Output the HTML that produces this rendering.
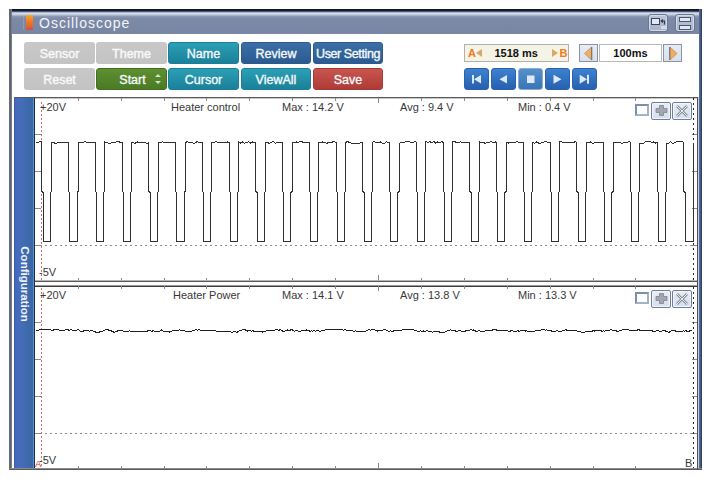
<!DOCTYPE html>
<html><head><meta charset="utf-8">
<style>
html,body{margin:0;padding:0;width:711px;height:479px;overflow:hidden;background:#fff;}
body{position:relative;font-family:"Liberation Sans",sans-serif;}
.a{position:absolute;}
.btn{position:absolute;height:22px;border-radius:3px;color:#f6f9fb;font-weight:normal;-webkit-text-stroke:0.35px currentColor;font-size:12.5px;letter-spacing:0px;line-height:23px;text-align:center;box-sizing:border-box;}
.gray{background:linear-gradient(#c8c8c8,#c3c3c3);color:#f8f8f8;padding-top:1px;-webkit-text-stroke:0.45px #f8f8f8;}
.teal{background:linear-gradient(#2ba0b4,#1b809a);border:1px solid #1c7e98;}
.blue{background:linear-gradient(#3b6fa8,#2b5a90);border:1px solid #2a5a8e;}
.green{background:linear-gradient(#5f8f32,#4a7a24);border:1px solid #456f20;}
.red{background:linear-gradient(#c9554f,#ae3b37);border:1px solid #a83a36;}
.pb{position:absolute;top:68px;width:25px;height:22px;border-radius:3px;background:linear-gradient(#3d82cf,#2760b0);box-sizing:border-box;border:1px solid #2a62ae;}
.txt{position:absolute;font-size:11px;color:#383838;line-height:12px;white-space:nowrap;}
</style></head><body>

<!-- window frame -->

<!-- title bar -->
<div class="a" style="left:9px;top:9px;width:693px;height:25px;background:linear-gradient(#0c1424 0px,#18203a 2px,#4a5670 2.5px,#98a4ba 3px,#d4dcea 4.5px,#c4ccdc 5.5px,#8c98b2 7.5px,#7c8aa6 9.5px,#7886a3 25px);"></div>
<div class="a" style="left:26px;top:15px;width:7px;height:15px;background:linear-gradient(#f2a838,#f07a1c 45%,#e06a30 70%,#cc5048);border-radius:1px;"></div>
<div class="a" style="left:23px;top:16px;width:1px;height:14px;background:#9aa6c0;opacity:.6"></div>
<div class="a" style="left:39px;top:15px;font-size:14px;letter-spacing:1px;line-height:16px;color:#f2f4f8;">Oscilloscope</div>

<div class="a" style="left:9px;top:9px;width:3px;height:461px;background:linear-gradient(90deg,#6a6e78,#5e626c 60%,#8a8e96);"></div>
<!-- title icons -->
<div class="a" style="left:648px;top:14px;width:20px;height:18px;border-radius:3px;box-sizing:border-box;border:1px solid #6a7690;box-shadow:inset 0 0 0 1px #d4dbe8;background:linear-gradient(#bcc6d8,#a8b3c8);"></div>
<div class="a" style="left:651px;top:18px;width:9px;height:7px;box-sizing:border-box;border:1px solid #3a4560;border-top-width:1.5px;background:#e2e8f2;"></div>
<div class="a" style="left:661px;top:26px;width:5px;height:3px;background:#d4dbe8;"></div>
<svg class="a" style="left:0;top:0" width="711" height="479"><path d="M664.5,20.5 L664.5,24.5 M661.5,21 L664.5,21 M662.8,19.5 L661.2,21 L662.8,22.5" stroke="#2e3a56" stroke-width="1.2" fill="none"/></svg>
<div class="a" style="left:675px;top:14px;width:20px;height:18px;border-radius:3px;box-sizing:border-box;border:1px solid #6a7690;box-shadow:inset 0 0 0 1px #d4dbe8;background:linear-gradient(#bcc6d8,#a8b3c8);"></div>
<div class="a" style="left:679px;top:17px;width:12px;height:5px;box-sizing:border-box;border:1px solid #4a5570;background:#e2e8f2;"></div>
<div class="a" style="left:679px;top:24.5px;width:12px;height:5px;box-sizing:border-box;border:1px solid #4a5570;background:#e2e8f2;"></div>
<div class="a" style="left:698px;top:97px;width:1px;height:373px;background:#c4cfe0;"></div><div class="a" style="left:699px;top:9px;width:3px;height:461px;background:linear-gradient(90deg,#58709a,#48608a 40%,#2a3858);"></div>
<!-- buttons row 1 -->
<div class="btn gray" style="left:24px;top:42px;width:71px;">Sensor</div>
<div class="btn gray" style="left:96px;top:42px;width:71px;">Theme</div>
<div class="btn teal" style="left:168px;top:42px;width:71px;">Name</div>
<div class="btn blue" style="left:241px;top:42px;width:70px;">Review</div>
<div class="btn blue" style="left:313px;top:42px;width:70px;letter-spacing:-0.4px;">User Setting</div>
<!-- row 2 -->
<div class="btn gray" style="left:24px;top:68px;width:71px;">Reset</div>
<div class="btn green" style="left:96px;top:68px;width:71px;"><span style="position:relative;left:1px;">Start</span><span style="position:absolute;left:58px;top:5px;width:0;height:0;border-left:3px solid transparent;border-right:3px solid transparent;border-bottom:3px solid #d6e0c8;"></span><span style="position:absolute;left:58px;top:11.5px;width:0;height:0;border-left:3px solid transparent;border-right:3px solid transparent;border-top:3px solid #d6e0c8;"></span></div>
<div class="btn teal" style="left:168px;top:68px;width:71px;">Cursor</div>
<div class="btn teal" style="left:241px;top:68px;width:70px;">ViewAll</div>
<div class="btn red" style="left:313px;top:68px;width:70px;">Save</div>

<!-- A/B box -->
<div class="a" style="left:464px;top:44px;width:105px;height:18px;box-sizing:border-box;border:1px solid #b4b2a8;background:#f5f3e6;"></div>
<div class="a" style="left:468px;top:45px;font-size:11px;font-weight:bold;line-height:16px;color:#f07a20;">A</div>
<div class="a" style="left:476px;top:49px;width:0;height:0;border-top:4.5px solid transparent;border-bottom:4.5px solid transparent;border-right:6px solid #d8a868;"></div>
<div class="a" style="left:494.5px;top:45px;font-size:11px;font-weight:bold;line-height:16px;color:#111;">1518 ms</div>
<div class="a" style="left:552px;top:49px;width:0;height:0;border-top:4.5px solid transparent;border-bottom:4.5px solid transparent;border-left:6px solid #d8a868;"></div>
<div class="a" style="left:559.5px;top:45px;font-size:11px;font-weight:bold;line-height:16px;color:#f07a20;">B</div>

<!-- time/div -->
<div class="a" style="left:579px;top:44px;width:19px;height:18px;box-sizing:border-box;border:1px solid #8c929e;background:linear-gradient(#e6ecf5,#d8e0ec);"></div>
<svg class="a" style="left:0;top:0" width="711" height="479"><polygon points="591.5,47 591.5,60 584.5,53.5" fill="#eeb060" stroke="#b08040" stroke-width="0.6"/><line x1="591.8" y1="47" x2="591.8" y2="60" stroke="#56608a" stroke-width="0.9"/></svg>
<div class="a" style="left:599px;top:44px;width:63px;height:18px;box-sizing:border-box;border:1px solid #b8b8b8;background:#fff;"></div>
<div class="a" style="left:599px;top:45px;width:63px;text-align:center;font-size:11px;font-weight:bold;line-height:16px;color:#111;">100ms</div>
<div class="a" style="left:663px;top:44px;width:19px;height:18px;box-sizing:border-box;border:1px solid #8c929e;background:linear-gradient(#e6ecf5,#d8e0ec);"></div>
<svg class="a" style="left:0;top:0" width="711" height="479"><polygon points="670,47 670,60 677,53.5" fill="#eeb060" stroke="#b08040" stroke-width="0.6"/><line x1="669.7" y1="47" x2="669.7" y2="60" stroke="#56608a" stroke-width="0.9"/></svg>

<!-- playback -->
<div class="pb" style="left:464px;"></div>
<div class="pb" style="left:491px;"></div>
<div class="pb" style="left:518px;background:linear-gradient(#5590cc,#3a74b4);border:1px solid #86aed8;"></div>
<div class="pb" style="left:545px;"></div>
<div class="pb" style="left:572px;"></div>
<svg class="a" style="left:0;top:0;" width="711" height="479">
<g fill="#dde9f6">
<rect x="472" y="75" width="2" height="8.5"/><polygon points="474,79.2 481,75 481,83.5"/>
<polygon points="499.5,79.2 507,75 507,83.5"/>
<rect x="527" y="75.5" width="7.5" height="7.5"/>
<polygon points="553.5,74.8 553.5,83.7 561.5,79.2"/>
<polygon points="579.7,74.8 579.7,83.7 587,79.2"/><rect x="587" y="74.8" width="2" height="8.9"/>
</g>
</svg>

<!-- sidebar -->
<div class="a" style="left:14px;top:97px;width:20px;height:371px;background:linear-gradient(90deg,#3a5aaa 0px,#4468bc 1.5px,#476cbc 5px,#426cb2 10px,#3a68a6 17px,#3968a4 18.5px,#5890c8 19px,#5890c8 20px);"></div>
<div class="a" style="left:34px;top:97px;width:1px;height:371px;background:#1b2c52;"></div>
<div class="a" style="left:24.5px;top:283.5px;width:0;height:0;"><div style="position:absolute;left:0;top:0;transform:translate(-50%,-50%) rotate(90deg);font-size:11.5px;font-weight:bold;color:#eef2fa;white-space:nowrap;line-height:12px;">Configuration</div></div>

<!-- chart svg -->
<svg class="a" style="left:0;top:0;" width="711" height="479" shape-rendering="crispEdges">
<!-- panel borders -->
<rect x="14" y="97" width="683" height="1" fill="#5a5a5a"/><rect x="35" y="98" width="662" height="1" fill="#c8c8c8"/>
<rect x="35" y="280" width="663" height="1" fill="#b4b4b4"/><rect x="35" y="281" width="663" height="1" fill="#585858"/>
<rect x="35" y="285" width="663" height="1" fill="#9a9a9a"/><rect x="35" y="286" width="663" height="1" fill="#3a3a3a"/>
<rect x="9" y="468" width="693" height="1" fill="#8a8a8a"/><rect x="9" y="469" width="693" height="1" fill="#5a5a5a"/>
<rect x="697" y="97" width="1" height="372" fill="#505050"/>
<g stroke="#8a8a8a" stroke-width="1">
<line x1="78.5" y1="98" x2="78.5" y2="100.5"/>
<line x1="78.5" y1="277.5" x2="78.5" y2="280"/>
<line x1="121.5" y1="98" x2="121.5" y2="100.5"/>
<line x1="121.5" y1="277.5" x2="121.5" y2="280"/>
<line x1="164.5" y1="98" x2="164.5" y2="100.5"/>
<line x1="164.5" y1="277.5" x2="164.5" y2="280"/>
<line x1="206.5" y1="98" x2="206.5" y2="100.5"/>
<line x1="206.5" y1="277.5" x2="206.5" y2="280"/>
<line x1="249.5" y1="98" x2="249.5" y2="100.5"/>
<line x1="249.5" y1="277.5" x2="249.5" y2="280"/>
<line x1="292.5" y1="98" x2="292.5" y2="100.5"/>
<line x1="292.5" y1="277.5" x2="292.5" y2="280"/>
<line x1="335.5" y1="98" x2="335.5" y2="100.5"/>
<line x1="335.5" y1="277.5" x2="335.5" y2="280"/>
<line x1="378.5" y1="98" x2="378.5" y2="103"/>
<line x1="378.5" y1="275" x2="378.5" y2="280"/>
<line x1="421.5" y1="98" x2="421.5" y2="100.5"/>
<line x1="421.5" y1="277.5" x2="421.5" y2="280"/>
<line x1="464.5" y1="98" x2="464.5" y2="100.5"/>
<line x1="464.5" y1="277.5" x2="464.5" y2="280"/>
<line x1="507.5" y1="98" x2="507.5" y2="100.5"/>
<line x1="507.5" y1="277.5" x2="507.5" y2="280"/>
<line x1="550.5" y1="98" x2="550.5" y2="100.5"/>
<line x1="550.5" y1="277.5" x2="550.5" y2="280"/>
<line x1="593.5" y1="98" x2="593.5" y2="100.5"/>
<line x1="593.5" y1="277.5" x2="593.5" y2="280"/>
<line x1="635.5" y1="98" x2="635.5" y2="100.5"/>
<line x1="635.5" y1="277.5" x2="635.5" y2="280"/>
<line x1="35" y1="134.5" x2="41" y2="134.5"/>
<line x1="692" y1="134.5" x2="697" y2="134.5"/>
<line x1="35" y1="171.5" x2="41" y2="171.5"/>
<line x1="692" y1="171.5" x2="697" y2="171.5"/>
<line x1="35" y1="208.5" x2="41" y2="208.5"/>
<line x1="692" y1="208.5" x2="697" y2="208.5"/>
<line x1="35" y1="245.5" x2="41" y2="245.5"/>
<line x1="692" y1="245.5" x2="697" y2="245.5"/>
<line x1="78.5" y1="286" x2="78.5" y2="288.5"/>
<line x1="78.5" y1="465.5" x2="78.5" y2="468"/>
<line x1="121.5" y1="286" x2="121.5" y2="288.5"/>
<line x1="121.5" y1="465.5" x2="121.5" y2="468"/>
<line x1="164.5" y1="286" x2="164.5" y2="288.5"/>
<line x1="164.5" y1="465.5" x2="164.5" y2="468"/>
<line x1="206.5" y1="286" x2="206.5" y2="288.5"/>
<line x1="206.5" y1="465.5" x2="206.5" y2="468"/>
<line x1="249.5" y1="286" x2="249.5" y2="288.5"/>
<line x1="249.5" y1="465.5" x2="249.5" y2="468"/>
<line x1="292.5" y1="286" x2="292.5" y2="288.5"/>
<line x1="292.5" y1="465.5" x2="292.5" y2="468"/>
<line x1="335.5" y1="286" x2="335.5" y2="288.5"/>
<line x1="335.5" y1="465.5" x2="335.5" y2="468"/>
<line x1="378.5" y1="286" x2="378.5" y2="291"/>
<line x1="378.5" y1="463" x2="378.5" y2="468"/>
<line x1="421.5" y1="286" x2="421.5" y2="288.5"/>
<line x1="421.5" y1="465.5" x2="421.5" y2="468"/>
<line x1="464.5" y1="286" x2="464.5" y2="288.5"/>
<line x1="464.5" y1="465.5" x2="464.5" y2="468"/>
<line x1="507.5" y1="286" x2="507.5" y2="288.5"/>
<line x1="507.5" y1="465.5" x2="507.5" y2="468"/>
<line x1="550.5" y1="286" x2="550.5" y2="288.5"/>
<line x1="550.5" y1="465.5" x2="550.5" y2="468"/>
<line x1="593.5" y1="286" x2="593.5" y2="288.5"/>
<line x1="593.5" y1="465.5" x2="593.5" y2="468"/>
<line x1="635.5" y1="286" x2="635.5" y2="288.5"/>
<line x1="635.5" y1="465.5" x2="635.5" y2="468"/>
<line x1="35" y1="322.5" x2="41" y2="322.5"/>
<line x1="692" y1="322.5" x2="697" y2="322.5"/>
<line x1="35" y1="359.5" x2="41" y2="359.5"/>
<line x1="692" y1="359.5" x2="697" y2="359.5"/>
<line x1="35" y1="396.5" x2="41" y2="396.5"/>
<line x1="692" y1="396.5" x2="697" y2="396.5"/>
<line x1="35" y1="433.5" x2="41" y2="433.5"/>
<line x1="692" y1="433.5" x2="697" y2="433.5"/>
</g>
<!-- dashed lines -->
<g stroke="#8c8c8c" stroke-width="1" stroke-dasharray="2,3" shape-rendering="crispEdges">
<line x1="35" y1="245.5" x2="693" y2="245.5"/>
<line x1="35" y1="433.5" x2="693" y2="433.5"/>
</g>
<g stroke="#2a2a2a" stroke-width="1" stroke-dasharray="2,3">
<line x1="693.5" y1="98" x2="693.5" y2="280"/>
<line x1="693.5" y1="287" x2="693.5" y2="468"/>
</g>
<g stroke="#e06868" stroke-width="1" stroke-dasharray="2,2">
<line x1="41.5" y1="102" x2="41.5" y2="280"/>
<line x1="41.5" y1="288" x2="41.5" y2="468"/>
</g>
</svg>
<svg class="a" style="left:0;top:0;" width="711" height="479">
<polyline fill="none" stroke="#303030" stroke-width="1" shape-rendering="crispEdges" points="35.5,142.5 37.5,142.5 39.5,141.9 41.5,141.5 41.9,142.5 41.9,191.5 43.1,192.5 43.1,241.5 50.2,241.5 50.2,192.5 51.3,191.5 51.3,142.5 53.3,142.5 55.3,143.3 57.3,143 59.3,142.5 61.3,142.5 63.3,143 65.3,142.5 67.3,143 68.7,142.5 68.7,191.5 69.9,192.5 69.9,241.5 77,241.5 77,192.5 78,191.5 78,142.5 80,142.5 82,142.5 84,141.9 86,141.9 88,142.5 90,142.5 92,142.5 94,143 95.4,142.5 95.4,191.5 96.6,192.5 96.6,241.5 103.7,241.5 103.7,192.5 104.8,191.5 104.8,141.9 106.8,142.5 108.8,143.3 110.8,143 112.8,142.5 114.8,142.5 116.8,141.5 118.8,141.5 120.8,143 122.2,142.5 122.2,191.5 123.4,192.5 123.4,241.5 130.5,241.5 130.5,192.5 131.6,191.5 131.6,142.5 133.6,143 135.6,143 137.6,141.9 139.6,142.5 141.6,142.5 143.6,142.5 145.6,143 147.6,143.3 148.9,142.5 148.9,191.5 150.1,192.5 150.1,241.5 157.2,241.5 157.2,192.5 158.3,191.5 158.3,142.5 160.3,142.5 162.3,141.9 164.3,142.5 166.3,143 168.3,142.5 170.3,143 172.3,142.5 174.3,143 175.7,142.5 175.7,191.5 176.8,192.5 176.8,241.5 184,241.5 184,192.5 185.1,191.5 185.1,143.3 187.1,141.5 189.1,142.5 191.1,142.5 193.1,143 195.1,143 197.1,141.5 199.1,142.5 201.1,142.5 202.4,142.5 202.4,191.5 203.6,192.5 203.6,241.5 210.7,241.5 210.7,192.5 211.8,191.5 211.8,142.5 213.8,143 215.8,141.5 217.8,142.5 219.8,143 221.8,142.5 223.8,143 225.8,142.5 227.8,141.9 229.2,142.5 229.2,191.5 230.3,192.5 230.3,241.5 237.5,241.5 237.5,192.5 238.6,191.5 238.6,141.5 240.6,143 242.6,141.9 244.6,143.3 246.6,142.5 248.6,141.9 250.6,143 252.6,141.9 254.6,142.5 255.9,142.5 255.9,191.5 257.1,192.5 257.1,241.5 264.2,241.5 264.2,192.5 265.3,191.5 265.3,142.5 267.3,142.5 269.3,143.3 271.3,142.5 273.3,141.5 275.3,143.3 277.3,142.5 279.3,142.5 281.3,143 282.6,142.5 282.6,191.5 283.8,192.5 283.8,241.5 290.9,241.5 290.9,192.5 292.1,191.5 292.1,142.5 294.1,143 296.1,141.9 298.1,142.5 300.1,141.5 302.1,141.9 304.1,142.5 306.1,143 308.1,142.5 309.4,142.5 309.4,191.5 310.6,192.5 310.6,241.5 317.7,241.5 317.7,192.5 318.8,191.5 318.8,142.5 320.8,143 322.8,141.9 324.8,142.5 326.8,143.3 328.8,142.5 330.8,142.5 332.8,141.9 334.8,141.9 336.1,142.5 336.1,191.5 337.3,192.5 337.3,241.5 344.4,241.5 344.4,192.5 345.6,191.5 345.6,142.5 347.6,141.5 349.6,142.5 351.6,143.3 353.6,143 355.6,143 357.6,143.3 359.6,143.3 361.6,142.5 362.9,142.5 362.9,191.5 364.1,192.5 364.1,241.5 371.2,241.5 371.2,192.5 372.3,191.5 372.3,142.5 374.3,141.5 376.3,142.5 378.3,143 380.3,141.9 382.3,143 384.3,143.3 386.3,141.9 388.3,142.5 389.6,142.5 389.6,191.5 390.8,192.5 390.8,241.5 397.9,241.5 397.9,192.5 399.1,191.5 399.1,143.3 401.1,142.5 403.1,142.5 405.1,141.9 407.1,141.5 409.1,141.5 411.1,142.5 413.1,142.5 415.1,141.5 416.4,142.5 416.4,191.5 417.6,192.5 417.6,241.5 424.7,241.5 424.7,192.5 425.8,191.5 425.8,141.5 427.8,142.5 429.8,141.5 431.8,143 433.8,141.5 435.8,143.3 437.8,141.9 439.8,142.5 441.8,141.5 443.1,142.5 443.1,191.5 444.3,192.5 444.3,241.5 451.4,241.5 451.4,192.5 452.6,191.5 452.6,141.9 454.6,141.5 456.6,142.5 458.6,142.5 460.6,141.9 462.6,142.5 464.6,142.5 466.6,143 468.6,142.5 469.9,142.5 469.9,191.5 471.1,192.5 471.1,241.5 478.2,241.5 478.2,192.5 479.3,191.5 479.3,141.9 481.3,142.5 483.3,142.5 485.3,143.3 487.3,142.5 489.3,142.5 491.3,141.5 493.3,142.5 495.3,141.9 496.6,142.5 496.6,191.5 497.8,192.5 497.8,241.5 504.9,241.5 504.9,192.5 506.1,191.5 506.1,141.9 508.1,143.3 510.1,141.9 512,142.5 514,142.5 516,141.9 518,141.9 520,143 522,142.5 523.4,142.5 523.4,191.5 524.6,192.5 524.6,241.5 531.7,241.5 531.7,192.5 532.8,191.5 532.8,142.5 534.8,143.3 536.8,141.9 538.8,143.3 540.8,143 542.8,142.5 544.8,141.5 546.8,141.9 548.8,142.5 550.1,142.5 550.1,191.5 551.4,192.5 551.4,241.5 558.4,241.5 558.4,192.5 559.5,191.5 559.5,141.5 561.5,141.9 563.5,142.5 565.5,142.5 567.5,142.5 569.5,142.5 571.5,142.5 573.5,142.5 575.5,141.5 576.9,142.5 576.9,191.5 578.1,192.5 578.1,241.5 585.2,241.5 585.2,192.5 586.3,191.5 586.3,142.5 588.3,142.5 590.3,141.9 592.3,143.3 594.3,143 596.3,142.5 598.3,142.5 600.3,142.5 602.3,142.5 603.6,142.5 603.6,191.5 604.9,192.5 604.9,241.5 611.9,241.5 611.9,192.5 613,191.5 613,142.5 615,141.9 617,143 619,142.5 621,143 623,143 625,142.5 627,142.5 629,141.5 630.4,142.5 630.4,191.5 631.6,192.5 631.6,241.5 638.7,241.5 638.7,192.5 639.8,191.5 639.8,143.3 641.8,143 643.8,143 645.8,141.5 647.8,141.5 649.8,141.5 651.8,142.5 653.8,141.9 655.8,143.3 657.1,142.5 657.1,191.5 658.4,192.5 658.4,241.5 665.4,241.5 665.4,192.5 666.5,191.5 666.5,143.3 668.5,143.3 670.5,141.5 672.5,143.3 674.5,143 676.5,141.9 678.5,141.9 680.5,141.9 682.5,141.9 683.9,142.5 683.9,191.5 685.1,192.5 685.1,241.5 692.2,241.5 693.5,241.5 693.5,142.5"/>
<polyline fill="none" stroke="#202020" stroke-width="1" shape-rendering="crispEdges" points="35.5,330.8 36.7,331 37.9,330.3 39.1,329.8 40.3,329.6 41.5,329.3 42.7,329.4 43.9,329.2 45.1,329.2 46.3,329.2 47.5,329.2 48.7,329.3 49.9,329.2 51.1,330.1 52.3,330.4 53.5,330 54.7,329.8 55.9,329.8 57.1,329.8 58.3,329.4 59.5,330.2 60.7,331 61.9,330.9 63.1,330.9 64.3,330.3 65.5,329.8 66.7,329.8 67.9,329.6 69.1,330.3 70.3,330 71.5,329.4 72.7,330.4 73.9,330.5 75.1,330 76.3,330.3 77.5,329.7 78.7,329.9 79.9,330.8 81.1,331.3 82.3,331.5 83.5,331 84.7,330.8 85.9,330.3 87.1,330.8 88.3,330.8 89.5,331.2 90.7,330.9 91.9,330.5 93.1,331 94.3,331.7 95.5,332 96.7,332.2 97.9,332.3 99.1,332.3 100.3,331.6 101.5,331.5 102.7,331.1 103.9,330.4 105.1,329.8 106.3,329.7 107.5,329.6 108.7,330.1 109.9,330.9 111.1,330.8 112.3,331.4 113.5,332 114.7,332.3 115.9,331.8 117.1,331.2 118.3,330.7 119.5,330.3 120.7,330 121.9,330.3 123.1,331 124.3,331.4 125.5,331.3 126.7,331.4 127.9,331.7 129.1,330.9 130.3,331.1 131.5,331.7 132.7,331.9 133.9,332 135.1,331.8 136.3,331.1 137.5,331.5 138.7,331.1 139.9,331.5 141.1,332 142.3,331.6 143.5,331.3 144.7,331.9 145.9,332 147.1,331.3 148.3,330.6 149.5,330.2 150.7,330.9 151.9,331.3 153.1,330.7 154.3,331.2 155.5,331.8 156.7,331.8 157.9,331.4 159.1,331.4 160.3,330.7 161.5,330 162.7,330.9 163.9,331.1 165.1,331.1 166.3,331.6 167.5,331.4 168.7,331.8 169.9,332.1 171.1,331.4 172.3,330.9 173.5,330.6 174.7,330.3 175.9,330.5 177.1,330.2 178.3,330.2 179.5,329.8 180.7,330.6 181.9,330.4 183.1,330.4 184.3,330.6 185.5,331.2 186.7,331 187.9,331.6 189.1,331.4 190.3,331.4 191.5,331.3 192.7,330.5 193.9,330.5 195.1,330.1 196.3,329.5 197.5,330.2 198.7,329.8 199.9,330 201.1,330.5 202.3,330.6 203.5,330.4 204.7,330.5 205.9,330.7 207.1,331.1 208.3,330.5 209.5,330.6 210.7,330.3 211.9,330.1 213.1,330.6 214.3,330.7 215.5,330.8 216.7,331.2 217.9,331.7 219.1,331.4 220.3,331.5 221.5,331.3 222.7,331.2 223.9,331.4 225.1,331.2 226.3,331.2 227.5,331.1 228.7,331.7 229.9,331.8 231.1,332.1 232.3,332.3 233.5,331.7 234.7,331.6 235.9,332.1 237.1,332.3 238.3,331.5 239.5,330.8 240.7,330.7 241.9,330.1 243.1,329.9 244.3,329.4 245.5,330 246.7,330.5 247.9,331.2 249.1,330.6 250.3,330.9 251.5,331.1 252.7,330.6 253.9,331.2 255.1,331.8 256.3,331.2 257.5,331.7 258.7,331.4 259.9,331.3 261.1,331.9 262.3,332.1 263.5,331.4 264.7,331.2 265.9,331.1 267.1,330.8 268.3,330.4 269.5,330.2 270.7,330.6 271.9,330 273.1,330.2 274.3,330.3 275.5,329.7 276.7,329.7 277.9,330.1 279.1,330.2 280.3,329.7 281.5,330.6 282.7,331.1 283.9,331.7 285.1,331 286.3,330.6 287.5,330 288.7,330.5 289.9,330.3 291.1,329.8 292.3,329.9 293.5,330.7 294.7,331.2 295.9,330.7 297.1,330.3 298.3,331 299.5,331 300.7,331.3 301.9,330.6 303.1,330 304.3,330.4 305.5,330.4 306.7,329.9 307.9,330.7 309.1,330.9 310.3,331.3 311.5,330.6 312.7,331.2 313.9,330.5 315.1,331.1 316.3,330.9 317.5,330.7 318.7,330.8 319.9,331.4 321.1,330.9 322.3,330.4 323.5,330.5 324.7,330.2 325.9,329.7 327.1,329.5 328.3,329.2 329.5,329.2 330.7,329.2 331.9,329.3 333.1,330 334.3,329.8 335.5,330 336.7,329.7 337.9,329.7 339.1,329.2 340.3,329.2 341.5,329.2 342.7,329.9 343.9,330.1 345.1,329.8 346.3,330 347.5,330.8 348.7,330.2 349.9,330.8 351.1,330.7 352.3,330.7 353.5,331.2 354.7,331 355.9,330.9 357.1,331.2 358.3,331.8 359.5,331.4 360.7,331.7 361.9,331.8 363.1,331.8 364.3,331.5 365.5,331.1 366.7,330.4 367.9,330 369.1,329.5 370.3,330.1 371.5,329.9 372.7,329.6 373.9,329.2 375.1,330 376.3,330.7 377.5,331 378.7,330.6 379.9,330.3 381.1,330.1 382.3,330.2 383.5,329.8 384.7,329.9 385.9,329.8 387.1,330.6 388.3,331.3 389.5,331.3 390.7,330.8 391.9,331.5 393.1,331.1 394.3,330.8 395.5,330.1 396.7,330.1 397.9,330.2 399.1,330.3 400.3,330 401.5,330.1 402.7,329.6 403.9,329.5 405.1,329.2 406.3,329.4 407.5,329.2 408.7,329.2 409.9,329.2 411.1,329.2 412.3,329.6 413.5,329.9 414.7,330.5 415.9,330.8 417.1,331.1 418.3,331.6 419.5,331.3 420.7,330.9 421.9,331.6 423.1,330.9 424.3,331.2 425.5,331.3 426.7,330.6 427.9,331.1 429.1,331.6 430.3,331.6 431.5,331.8 432.7,332.1 433.9,331.3 435.1,331.2 436.3,331.1 437.5,331.6 438.7,331.8 439.9,332.1 441.1,332 442.3,332.3 443.5,332.3 444.7,332.2 445.9,331.6 447.1,330.7 448.3,330.2 449.5,330.1 450.7,329.7 451.9,330.4 453.1,330.6 454.3,330.8 455.5,331 456.7,331.2 457.9,331.1 459.1,330.3 460.3,330.9 461.5,331.2 462.7,331.1 463.9,331.1 465.1,331.3 466.3,330.6 467.5,330.9 468.7,330.6 469.9,330 471.1,329.8 472.3,330.3 473.5,330 474.7,330.5 475.9,331.3 477.1,331.2 478.3,330.9 479.5,330.9 480.7,331.1 481.9,331.4 483.1,331.5 484.3,331.5 485.5,330.8 486.7,330.3 487.9,330 489.1,330.5 490.3,330.3 491.5,330.5 492.7,329.9 493.9,329.4 495.1,329.4 496.3,329.9 497.5,330.4 498.7,330.7 499.9,330.4 501.1,330.5 502.3,330.5 503.5,330.5 504.7,330 505.9,330.8 507.1,330.3 508.3,331.1 509.5,331.7 510.7,330.8 511.9,330.7 513.1,331.2 514.3,331.8 515.5,331.5 516.7,331.1 517.9,330.6 519.1,331.3 520.3,330.8 521.5,330.9 522.7,330.4 523.9,330.5 525.1,331.2 526.3,330.6 527.5,331.1 528.7,331 529.9,331.6 531.1,331.7 532.3,331.1 533.5,331.6 534.7,331.4 535.9,330.6 537.1,330 538.3,330.1 539.5,330.2 540.7,330 541.9,329.7 543.1,329.7 544.3,329.6 545.5,330.3 546.7,329.7 547.9,330.3 549.1,330.9 550.3,330.3 551.5,331 552.7,331.3 553.9,331.8 555.1,331.3 556.3,331 557.5,330.8 558.7,331.5 559.9,331.5 561.1,331.2 562.3,331 563.5,330.6 564.7,330 565.9,329.6 567.1,330.3 568.3,330.1 569.5,330.9 570.7,330.5 571.9,330.2 573.1,330.4 574.3,330 575.5,330 576.7,330.8 577.9,331.3 579.1,331.7 580.3,331.7 581.5,332.1 582.7,332.3 583.9,332.1 585.1,332.1 586.3,331.2 587.5,331.5 588.7,331.3 589.9,331.5 591.1,331.6 592.3,331.1 593.5,330.4 594.7,331.1 595.9,330.5 597.1,330.5 598.3,330.4 599.5,330.2 600.7,330.6 601.9,331.3 603.1,330.9 604.3,331.1 605.5,330.8 606.7,330.8 607.9,330.7 609.1,330.2 610.3,329.9 611.5,329.6 612.7,330.4 613.9,330.5 615.1,330.2 616.3,330.9 617.5,331.6 618.7,331.3 619.9,330.7 621.1,330.3 622.3,329.8 623.5,329.8 624.7,329.4 625.9,329.3 627.1,329.3 628.3,329.7 629.5,330.4 630.7,330.9 631.9,330.7 633.1,330.6 634.3,330.7 635.5,330.5 636.7,330.4 637.9,329.8 639.1,329.7 640.3,330.6 641.5,330.1 642.7,330.2 643.9,330.5 645.1,331.1 646.3,330.6 647.5,330.3 648.7,330.1 649.9,330.1 651.1,330.1 652.3,330.9 653.5,331.4 654.7,331.8 655.9,330.9 657.1,330.2 658.3,330.6 659.5,331.2 660.7,331.1 661.9,331.2 663.1,330.4 664.3,330.3 665.5,331 666.7,331.4 667.9,331.8 669.1,332.3 670.3,331.6 671.5,330.9 672.7,330.4 673.9,330.5 675.1,330.8 676.3,331.5 677.5,331.6 678.7,331.7 679.9,331.9 681.1,331.6 682.3,331.5 683.5,330.7 684.7,331.1 685.9,330.7 687.1,331.3 688.3,331.4 689.5,331 690.7,330.4 691.9,330.2"/>
</svg>

<!-- panel 1 labels -->
<div class="txt" style="left:40px;top:100.5px;">+20V</div>
<div class="txt" style="left:171px;top:100.5px;">Heater control</div>
<div class="txt" style="left:282px;top:100.5px;">Max : 14.2 V</div>
<div class="txt" style="left:400px;top:100.5px;">Avg : 9.4 V</div>
<div class="txt" style="left:518px;top:100.5px;">Min : 0.4 V</div>
<div class="txt" style="left:39px;top:266px;">-5V</div>
<!-- panel 2 labels -->
<div class="txt" style="left:40px;top:288.5px;">+20V</div>
<div class="txt" style="left:173px;top:288.5px;">Heater Power</div>
<div class="txt" style="left:282px;top:288.5px;">Max : 14.1 V</div>
<div class="txt" style="left:400px;top:288.5px;">Avg : 13.8 V</div>
<div class="txt" style="left:518px;top:288.5px;">Min : 13.3 V</div>
<div class="txt" style="left:39px;top:454px;">-5V</div>
<div class="txt" style="left:35px;top:457.5px;color:#d83838;font-size:9.5px;">A</div>
<div class="txt" style="left:685px;top:457px;">B</div>

<!-- checkboxes & buttons panel 1 -->
<div class="a" style="left:635px;top:104px;width:14px;height:12px;box-sizing:border-box;border:2px solid #7d8eab;border-right-color:#a6b2c6;border-bottom-color:#a6b2c6;background:#fff;"></div>
<div class="a" style="left:651px;top:102px;width:20px;height:18px;box-sizing:border-box;border:1px solid #6f7e9e;border-radius:2px;box-shadow:inset 0 0 0 1px #f2f5fa;background:linear-gradient(#e8edf5,#d6deea);"></div>
<div class="a" style="left:672px;top:102px;width:20px;height:18px;box-sizing:border-box;border:1px solid #6f7e9e;border-radius:2px;box-shadow:inset 0 0 0 1px #f2f5fa;background:linear-gradient(#e8edf5,#d6deea);"></div>
<div class="a" style="left:635px;top:292px;width:14px;height:12px;box-sizing:border-box;border:2px solid #7d8eab;border-right-color:#a6b2c6;border-bottom-color:#a6b2c6;background:#fff;"></div>
<div class="a" style="left:651px;top:290px;width:20px;height:18px;box-sizing:border-box;border:1px solid #6f7e9e;border-radius:2px;box-shadow:inset 0 0 0 1px #f2f5fa;background:linear-gradient(#e8edf5,#d6deea);"></div>
<div class="a" style="left:672px;top:290px;width:20px;height:18px;box-sizing:border-box;border:1px solid #6f7e9e;border-radius:2px;box-shadow:inset 0 0 0 1px #f2f5fa;background:linear-gradient(#e8edf5,#d6deea);"></div>
<svg class="a" style="left:0;top:0;" width="711" height="479">
<g fill="#a2a6ae" stroke="#7f858f" stroke-width="0.8">
<path d="M659.5,105.5 h4 v3 h3.5 v4 h-3.5 v3 h-4 v-3 h-3.5 v-4 h3.5 z"/>
<path d="M659.5,293.5 h4 v3 h3.5 v4 h-3.5 v3 h-4 v-3 h-3.5 v-4 h3.5 z"/>
</g>
<g stroke="#8a9098" stroke-width="2.6" fill="none">
<path d="M677,106 L687,116 M687,106 L677,116"/>
<path d="M677,294 L687,304 M687,294 L677,304"/>
</g>
<g stroke="#e6ebf3" stroke-width="1" fill="none">
<path d="M677,106 L687,116 M687,106 L677,116"/>
<path d="M677,294 L687,304 M687,294 L677,304"/>
</g>
</svg>

</body></html>
